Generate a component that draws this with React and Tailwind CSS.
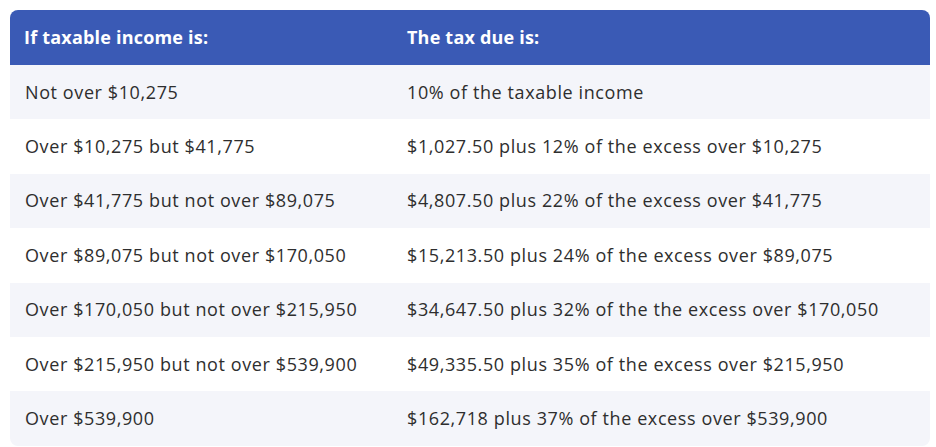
import React from "react";

const rows = [
  ["Not over $10,275", "10% of the taxable income"],
  ["Over $10,275 but $41,775", "$1,027.50 plus 12% of the excess over $10,275"],
  ["Over $41,775 but not over $89,075", "$4,807.50 plus 22% of the excess over $41,775"],
  ["Over $89,075 but not over $170,050", "$15,213.50 plus 24% of the excess over $89,075"],
  ["Over $170,050 but not over $215,950", "$34,647.50 plus 32% of the the excess over $170,050"],
  ["Over $215,950 but not over $539,900", "$49,335.50 plus 35% of the excess over $215,950"],
  ["Over $539,900", "$162,718 plus 37% of the excess over $539,900"],
];

export default function App() {
  return (
    <div className="w-[936px] h-[447px] bg-white pt-[10px] pl-[10px] font-['Open_Sans',sans-serif]">
      <div className="w-[920px] rounded-[8px] overflow-hidden">
        <div className="grid grid-cols-[381px_539px] h-[55px] items-center bg-[#3a5ab5] text-white font-bold text-[18px] tracking-[0.2px]">
          <div className="pl-[14px]">If taxable income is:</div>
          <div className="pl-[16px]">The tax due is:</div>
        </div>
        {rows.map((r, i) => (
          <div
            key={i}
            className={
              "grid grid-cols-[381px_539px] h-[54.4px] items-center text-[18px] tracking-[0.6px] text-[#2e2e2e] " +
              (i % 2 === 0 ? "bg-[#f4f5fa]" : "bg-white")
            }
          >
            <div className="pl-[15px]">{r[0]}</div>
            <div className="pl-[16px]">{r[1]}</div>
          </div>
        ))}
      </div>
    </div>
  );
}
